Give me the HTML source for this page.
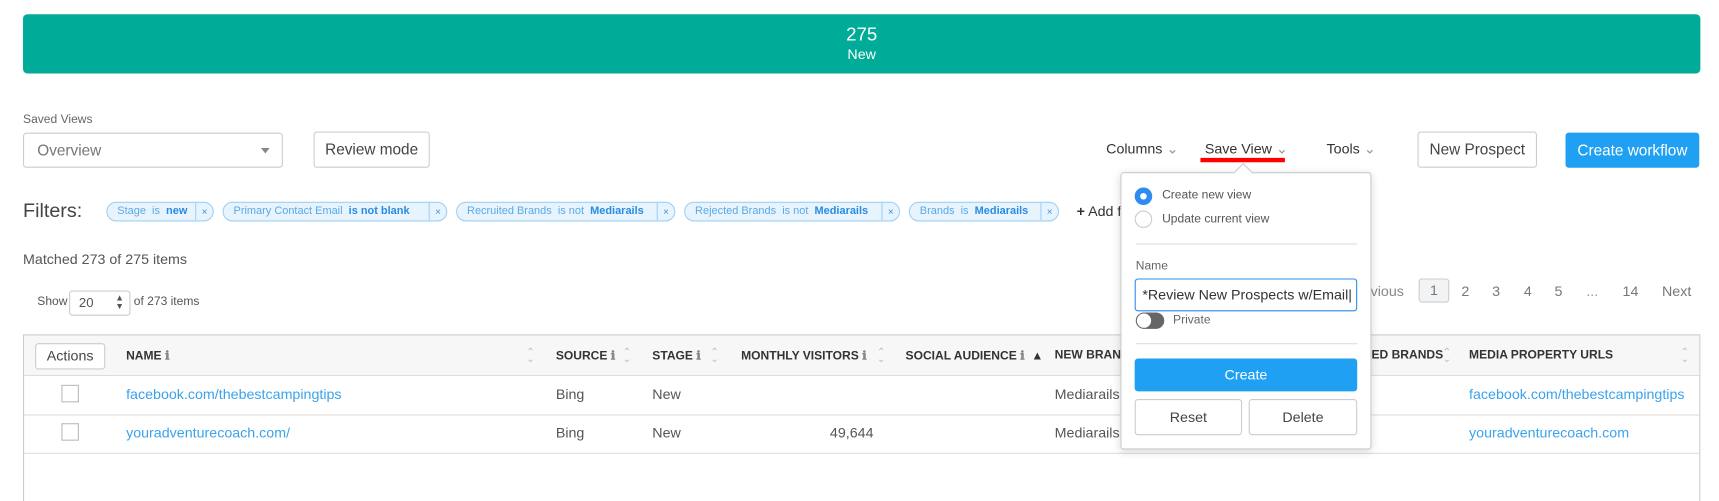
<!DOCTYPE html>
<html><head><meta charset="utf-8"><style>
*{box-sizing:border-box;margin:0;padding:0}
html,body{width:1719px;height:457px;overflow:hidden;background:#fff}
body{font-family:"Liberation Sans",sans-serif;color:#555}
#w{position:absolute;left:0;top:0;width:1568px;height:417px;transform:scale(1.0963);transform-origin:0 0}
.a{position:absolute;white-space:nowrap}
.banner{left:21px;top:13px;width:1530px;height:54px;background:#00ab97;border-radius:4px;color:#fff;text-align:center}
.btn{border:1px solid #ccc;border-radius:3px;background:#fff;color:#444;font-size:14px;text-align:center}
.chip{top:184px;height:18px;border:1px solid #9fd0f5;background:#e8f4fd;border-radius:9px;font-size:10px;color:#5aa9e6;line-height:16px;padding-left:9px;overflow:hidden}
.chip b{color:#2a8be0}
.chip .x{position:absolute;right:0;top:0;height:16px;border-left:1px solid #9fd0f5;width:16px;text-align:center;font-size:9px;color:#3a8fdc}
.th{top:318px;font-size:11px;font-weight:bold;color:#333}
.sort{font-size:9px;color:#bbb;line-height:6px}
.td{font-size:13px;color:#555}
.lnk{color:#3aa3ec}
.cb{width:16px;height:16px;border:1px solid #bbb;background:#fff}
</style></head><body><div id="w">
<div class="a banner"><div style="font-size:17px;margin-top:9px;line-height:20px">275</div><div style="font-size:13px;line-height:15px">New</div></div>

<div class="a" style="left:21px;top:103px;font-size:11px;color:#666">Saved Views</div>
<div class="a" style="left:21px;top:121px;width:237px;height:32px;border:1px solid #ccc;border-radius:3px;font-size:14px;color:#777;padding:7px 12px">Overview<span style="position:absolute;right:11px;top:13px;border:4px solid transparent;border-top:5px solid #888"></span></div>
<div class="a btn" style="left:286px;top:120px;width:106px;height:33px;line-height:31px">Review mode</div>

<div class="a" style="left:1009px;top:128px;font-size:13px;color:#333">Columns <span style="color:#999">&#8964;</span></div>
<div class="a" style="left:1099px;top:128px;font-size:13px;color:#333">Save View <span style="color:#999">&#8964;</span></div>
<div class="a" style="left:1095px;top:144px;width:77px;height:4px;background:#f00"></div>
<div class="a" style="left:1210px;top:128px;font-size:13px;color:#333">Tools <span style="color:#999">&#8964;</span></div>
<div class="a btn" style="left:1293px;top:120px;width:109px;height:33px;line-height:31px">New Prospect</div>
<div class="a" style="left:1428px;top:121px;width:122px;height:32px;background:#1fa0f2;border-radius:3px;color:#fff;font-size:14px;text-align:center;line-height:32px">Create workflow</div>

<div class="a" style="left:21px;top:182px;font-size:18px;color:#444">Filters:</div>
<div class="a chip" style="left:97px;width:98px">Stage&nbsp; is&nbsp; <b>new</b><span class="x">×</span></div>
<div class="a chip" style="left:203px;width:205px">Primary Contact Email&nbsp; <b>is not blank</b><span class="x">×</span></div>
<div class="a chip" style="left:416px;width:200px">Recruited Brands&nbsp; is not&nbsp; <b>Mediarails</b><span class="x">×</span></div>
<div class="a chip" style="left:624px;width:197px">Rejected Brands&nbsp; is not&nbsp; <b>Mediarails</b><span class="x">×</span></div>
<div class="a chip" style="left:829px;width:137px">Brands&nbsp; is&nbsp; <b>Mediarails</b><span class="x">×</span></div>
<div class="a" style="left:982px;top:185px;font-size:13px;color:#333"><b>+</b> Add f</div>

<div class="a" style="left:21px;top:229px;font-size:13px;color:#555">Matched 273 of 275 items</div>
<div class="a" style="left:34px;top:269px;font-size:11px;color:#555">Show</div>
<div class="a" style="left:63px;top:265px;width:56px;height:23px;border:1px solid #ccc;border-radius:3px;font-size:12px;padding:3px 8px">20<span style="position:absolute;right:5px;top:2px;font-size:8px;line-height:8px">▲<br>▼</span></div>
<div class="a" style="left:122px;top:269px;font-size:11px;color:#555">of 273 items</div>

<div class="a" style="left:1243px;top:258px;font-size:13px;color:#888">evious</div>
<div class="a" style="left:1294px;top:254px;width:28px;height:22px;border:1px solid #ccc;background:#f2f3f5;border-radius:3px;font-size:13px;text-align:center;line-height:20px;color:#777">1</div>
<div class="a" style="left:1333px;top:258px;font-size:13px;color:#777">2</div>
<div class="a" style="left:1361px;top:258px;font-size:13px;color:#777">3</div>
<div class="a" style="left:1390px;top:258px;font-size:13px;color:#777">4</div>
<div class="a" style="left:1418px;top:258px;font-size:13px;color:#777">5</div>
<div class="a" style="left:1447px;top:258px;font-size:13px;color:#999">...</div>
<div class="a" style="left:1480px;top:258px;font-size:13px;color:#777">14</div>
<div class="a" style="left:1516px;top:258px;font-size:13px;color:#777">Next</div>

<div class="a" style="left:21px;top:305px;width:1530px;height:152px;border:1px solid #ccc;border-bottom:none"></div>
<div class="a" style="left:22px;top:306px;width:1528px;height:37px;background:#f7f7f7;border-bottom:1px solid #ddd"></div>
<div class="a" style="left:22px;top:378px;width:1528px;height:1px;background:#ddd"></div>
<div class="a" style="left:22px;top:413px;width:1528px;height:1px;background:#ddd"></div>
<div class="a btn" style="left:32px;top:313px;width:64px;height:24px;line-height:22px;font-size:13px">Actions</div>
<div class="a th" style="left:115px">NAME <span style="color:#888">ℹ</span></div>
<div class="a sort" style="left:480px;top:318px">⌃<br>⌄</div>
<div class="a th" style="left:507px">SOURCE <span style="color:#888">ℹ</span></div>
<div class="a sort" style="left:568px;top:318px">⌃<br>⌄</div>
<div class="a th" style="left:595px">STAGE <span style="color:#888">ℹ</span></div>
<div class="a sort" style="left:648px;top:318px">⌃<br>⌄</div>
<div class="a th" style="left:676px">MONTHLY VISITORS <span style="color:#888">ℹ</span></div>
<div class="a sort" style="left:800px;top:318px">⌃<br>⌄</div>
<div class="a th" style="left:826px">SOCIAL AUDIENCE <span style="color:#888">ℹ</span> &nbsp;▲</div>
<div class="a th" style="left:962px">NEW BRAND</div>
<div class="a th" style="left:1251px">ED BRANDS</div>
<div class="a sort" style="left:1316px;top:318px">⌃<br>⌄</div>
<div class="a th" style="left:1340px">MEDIA PROPERTY URLS</div>
<div class="a sort" style="left:1533px;top:318px">⌃<br>⌄</div>

<div class="a cb" style="left:56px;top:351px"></div>
<div class="a td lnk" style="left:115px;top:352px">facebook.com/thebestcampingtips</div>
<div class="a td" style="left:507px;top:352px">Bing</div>
<div class="a td" style="left:595px;top:352px">New</div>
<div class="a td" style="left:962px;top:352px">Mediarails</div>
<div class="a td lnk" style="left:1340px;top:352px">facebook.com/thebestcampingtips</div>
<div class="a cb" style="left:56px;top:386px"></div>
<div class="a td lnk" style="left:115px;top:387px">youradventurecoach.com/</div>
<div class="a td" style="left:507px;top:387px">Bing</div>
<div class="a td" style="left:595px;top:387px">New</div>
<div class="a td" style="left:757px;top:387px">49,644</div>
<div class="a td" style="left:962px;top:387px">Mediarails</div>
<div class="a td lnk" style="left:1340px;top:387px">youradventurecoach.com</div>

<div class="a" style="left:1022px;top:157px;width:229px;height:253px;background:#fff;border:1px solid #ccc;border-radius:3px;box-shadow:0 2px 8px rgba(0,0,0,.15)"></div>
<div class="a" style="left:1128px;top:151px;width:12px;height:12px;background:#fff;border-left:1px solid #ccc;border-top:1px solid #ccc;transform:rotate(45deg)"></div>
<div class="a" style="left:1035px;top:171px;width:16px;height:16px;border-radius:50%;background:#2d8cf0"><div style="position:absolute;left:5px;top:5px;width:6px;height:6px;border-radius:50%;background:#fff"></div></div>
<div class="a" style="left:1060px;top:172px;font-size:11px;color:#555">Create new view</div>
<div class="a" style="left:1035px;top:192px;width:16px;height:16px;border-radius:50%;border:1px solid #ccc"></div>
<div class="a" style="left:1060px;top:194px;font-size:11px;color:#555">Update current view</div>
<div class="a" style="left:1036px;top:222px;width:202px;height:1px;background:#ddd"></div>
<div class="a" style="left:1036px;top:237px;font-size:11px;color:#666">Name</div>
<div class="a" style="left:1035px;top:254px;width:203px;height:30px;border:1px solid #2d8cf0;border-radius:3px;font-size:13px;color:#333;padding:6px 6px;overflow:hidden">*Review New Prospects w/Email|</div>
<div class="a" style="left:1036px;top:285px;width:26px;height:15px;border-radius:8px;background:#666"><div style="position:absolute;left:1px;top:1px;width:13px;height:13px;border-radius:50%;background:#fff"></div></div>
<div class="a" style="left:1070px;top:286px;font-size:11px;color:#666">Private</div>
<div class="a" style="left:1036px;top:313px;width:202px;height:1px;background:#ddd"></div>
<div class="a" style="left:1035px;top:327px;width:203px;height:30px;background:#1fa0f2;border-radius:3px;color:#fff;font-size:13px;text-align:center;line-height:30px">Create</div>
<div class="a btn" style="left:1035px;top:364px;width:98px;height:33px;line-height:31px;font-size:13px">Reset</div>
<div class="a btn" style="left:1139px;top:364px;width:99px;height:33px;line-height:31px;font-size:13px">Delete</div>
</div></body></html>
